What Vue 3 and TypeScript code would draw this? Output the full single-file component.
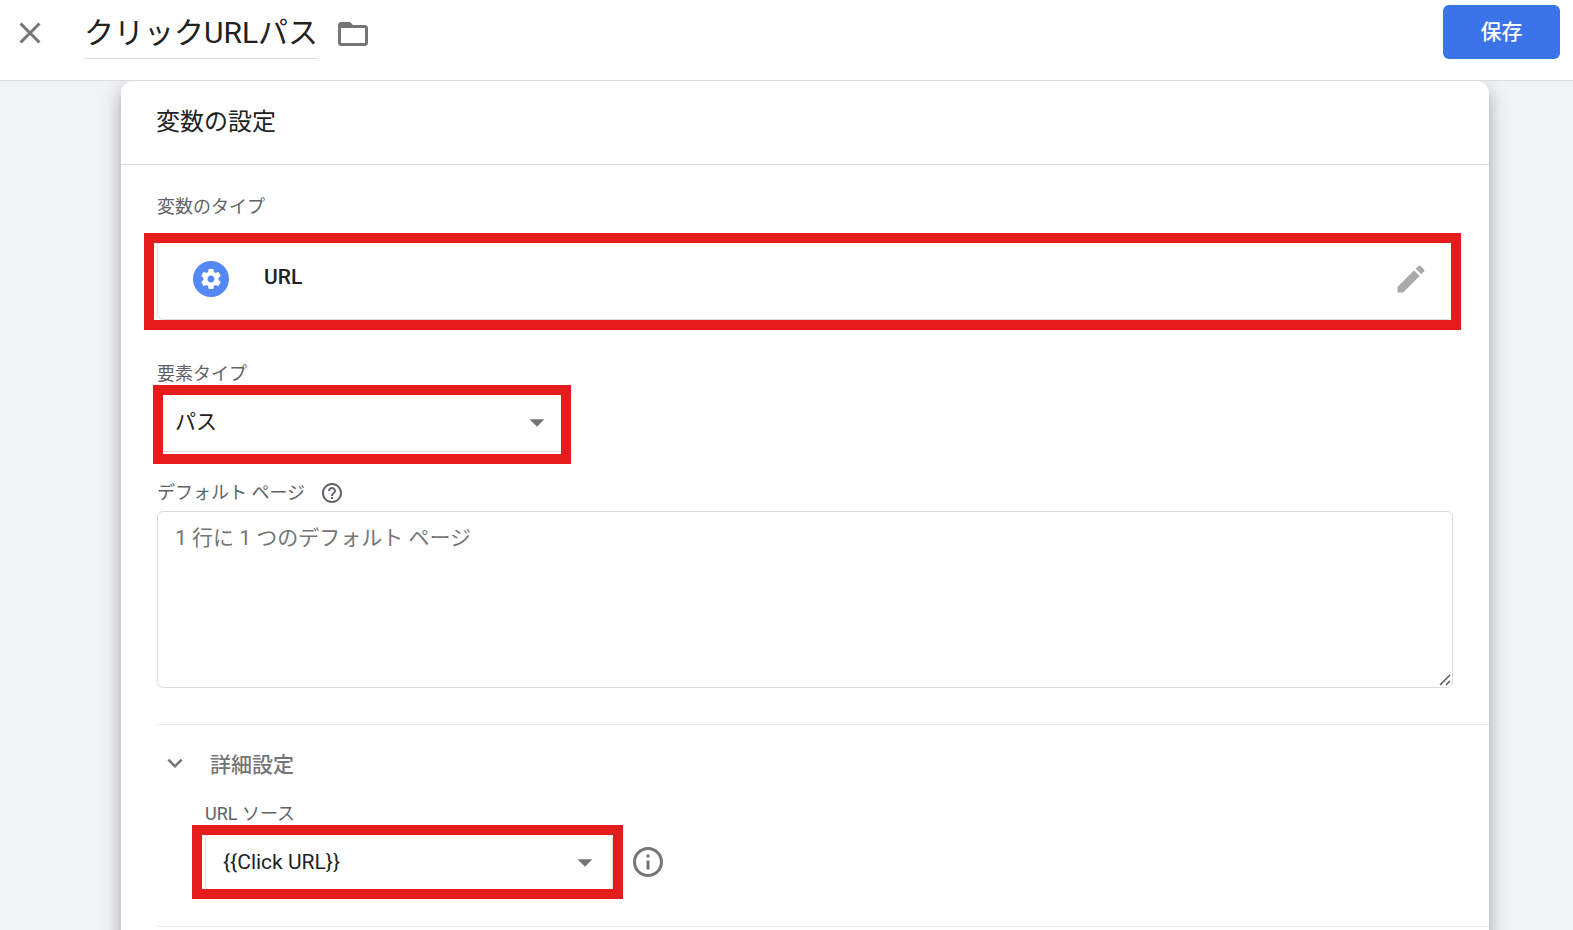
<script setup lang="ts">
import { ref } from 'vue'

const variableName = ref('クリックURLパス')
const componentType = ref('パス')
const componentTypes = ['パス']
const defaultPages = ref('')
const urlSource = ref('{{Click URL}}')
const urlSources = ['{{Click URL}}']
const advancedOpen = ref(true)
</script>

<template>
  <div class="page">
    <header class="topbar">
      <button class="icon-button close" type="button" aria-label="閉じる">
        <svg class="icon" viewBox="0 0 24 24" aria-hidden="true">
          <path d="M19 6.41 17.59 5 12 10.59 6.41 5 5 6.41 10.59 12 5 17.59 6.41 19 12 13.41 17.59 19 19 17.59 13.41 12z" />
        </svg>
      </button>
      <input v-model="variableName" class="name" type="text" aria-label="変数名" />
      <button class="icon-button folder" type="button" aria-label="フォルダ">
        <svg class="icon" viewBox="0 0 24 24" aria-hidden="true">
          <path d="M10 4H4c-1.1 0-1.99.9-1.99 2L2 18c0 1.1.9 2 2 2h16c1.1 0 2-.9 2-2V8c0-1.1-.9-2-2-2h-8l-2-2zM20 18H4V8h16v10z" />
        </svg>
      </button>
      <button class="save" type="button">保存</button>
    </header>

    <main class="workspace">
      <section class="card">
        <h2 class="card-title">変数の設定</h2>
        <div class="card-body">
          <div class="label">変数のタイプ</div>
          <div class="type-row">
            <span class="type-badge">
              <svg class="gear" viewBox="0 0 24 24" aria-hidden="true">
                <path d="M19.43 12.98c.04-.32.07-.64.07-.98s-.03-.66-.07-.98l2.11-1.65c.19-.15.24-.42.12-.64l-2-3.46c-.12-.22-.39-.3-.61-.22l-2.49 1c-.52-.4-1.08-.73-1.69-.98l-.38-2.65C14.46 2.18 14.25 2 14 2h-4c-.25 0-.46.18-.49.42l-.38 2.65c-.61.25-1.17.59-1.69.98l-2.49-1c-.23-.09-.49 0-.61.22l-2 3.46c-.13.22-.07.49.12.64l2.11 1.65c-.04.32-.07.65-.07.98s.03.66.07.98l-2.11 1.65c-.19.15-.24.42-.12.64l2 3.46c.12.22.39.3.61.22l2.49-1c.52.4 1.08.73 1.69.98l.38 2.65c.03.24.24.42.49.42h4c.25 0 .46-.18.49-.42l.38-2.65c.61-.25 1.17-.59 1.69-.98l2.49 1c.23.09.49 0 .61-.22l2-3.46c.12-.22.07-.49-.12-.64l-2.11-1.65zM12 15.5c-1.93 0-3.5-1.57-3.5-3.5s1.57-3.5 3.5-3.5 3.5 1.57 3.5 3.5-1.57 3.5-3.5 3.5z" />
              </svg>
            </span>
            <span class="type-name">URL</span>
            <button class="icon-button edit" type="button" aria-label="編集">
              <svg class="icon" viewBox="0 0 24 24" aria-hidden="true">
                <path d="M3 17.25V21h3.75L17.81 9.94l-3.75-3.75L3 17.25zM20.71 7.04c.39-.39.39-1.02 0-1.41l-2.34-2.34c-.39-.39-1.02-.39-1.41 0l-1.83 1.83 3.75 3.75 1.83-1.83z" />
              </svg>
            </button>
            <span class="marker marker-type"></span>
          </div>

          <label class="label label-component" for="component-type">要素タイプ</label>
          <div class="select-box">
            <select id="component-type" v-model="componentType">
              <option v-for="item in componentTypes" :key="item">{{ item }}</option>
            </select>
            <svg class="arrow" viewBox="0 0 24 24" aria-hidden="true"><path d="M7 9.5l5 5 5-5z" /></svg>
            <span class="marker marker-component"></span>
          </div>

          <div class="label-row">
            <label class="label" for="default-pages">デフォルト ページ</label>
            <button class="icon-button help" type="button" aria-label="ヘルプ">
              <svg class="icon" viewBox="0 0 24 24" aria-hidden="true">
                <path d="M11 18h2v-2h-2v2zm1-16C6.48 2 2 6.48 2 12s4.48 10 10 10 10-4.48 10-10S17.52 2 12 2zm0 18c-4.41 0-8-3.59-8-8s3.59-8 8-8 8 3.59 8 8-3.59 8-8 8zm0-14c-2.21 0-4 1.79-4 4h2c0-1.1.9-2 2-2s2 .9 2 2c0 2-3 1.75-3 5h2c0-2.25 3-2.5 3-5 0-2.21-1.79-4-4-4z" />
              </svg>
            </button>
          </div>
          <div class="textarea-box">
            <textarea id="default-pages" v-model="defaultPages" placeholder="1 行に 1 つのデフォルト ページ"></textarea>
            <svg class="grip" viewBox="0 0 12 12" aria-hidden="true"><path d="M1 11 11 1M7 11l4-4" /></svg>
          </div>
        </div>

        <div class="advanced">
          <button class="advanced-toggle" type="button" :aria-expanded="advancedOpen" @click="advancedOpen = !advancedOpen">
            <svg class="chevron" viewBox="0 0 24 24" aria-hidden="true">
              <path d="M16.59 8.59 12 13.17 7.41 8.59 6 10l6 6 6-6z" />
            </svg>
            詳細設定
          </button>
          <div v-if="advancedOpen" class="advanced-body">
            <label class="label" for="url-source">URL ソース</label>
            <div class="source-row">
              <div class="select-box select-source">
                <select id="url-source" v-model="urlSource">
                  <option v-for="item in urlSources" :key="item">{{ item }}</option>
                </select>
                <svg class="arrow" viewBox="0 0 24 24" aria-hidden="true"><path d="M7 9.5l5 5 5-5z" /></svg>
                <span class="marker marker-source"></span>
              </div>
              <button class="icon-button info" type="button" aria-label="情報">
                <svg class="icon" viewBox="0 0 24 24" aria-hidden="true">
                  <path d="M11 7h2v2h-2zm0 4h2v6h-2zm1-9C6.48 2 2 6.48 2 12s4.48 10 10 10 10-4.48 10-10S17.52 2 12 2zm0 18c-4.41 0-8-3.59-8-8s3.59-8 8-8 8 3.59 8 8-3.59 8-8 8z" />
                </svg>
              </button>
            </div>
          </div>
        </div>
        <div class="card-end"></div>
      </section>
    </main>
  </div>
</template>

<style>
body {
  margin: 0;
}
</style>

<style scoped>
.page {
  display: flex;
  flex-direction: column;
  height: 100vh;
  overflow: hidden;
  background: #f1f3f4;
  color: #212121;
  font-family: Roboto, 'Noto Sans CJK JP', sans-serif;
}

.page * {
  box-sizing: border-box;
}

button,
input,
select,
textarea {
  margin: 0;
  padding: 0;
  border: 0;
  background: none;
  color: inherit;
  font: inherit;
}

.icon-button {
  display: block;
  flex: none;
  width: 36px;
  height: 36px;
  color: #757575;
  cursor: pointer;
}

.icon {
  display: block;
  width: 100%;
  height: 100%;
  fill: currentColor;
}

.topbar {
  position: relative;
  z-index: 1;
  display: flex;
  flex: none;
  align-items: flex-start;
  height: 81px;
  padding: 5px 13px 0 12px;
  border-bottom: 1px solid #dadce0;
  background: #fff;
}

.close {
  margin-top: 10px;
}

.name {
  width: 233px;
  height: 54px;
  margin-left: 36px;
  padding-bottom: 3px;
  border-bottom: 1px solid #dadce0;
  border-radius: 0;
  font-size: 30px;
  outline: none;
}

.folder {
  margin: 11px 0 0 18px;
}

.save {
  width: 117px;
  height: 54px;
  margin-left: auto;
  padding-bottom: 4px;
  border-radius: 6px;
  background: #3b73e9;
  color: #fff;
  font-size: 21px;
  font-weight: 500;
  cursor: pointer;
}

.workspace {
  flex: 1;
  min-height: 0;
  padding: 0 84px 0 121px;
}

.card {
  border-radius: 12px;
  background: #fff;
  box-shadow:
    0 12px 15px 1px rgba(0, 0, 0, 0.14),
    0 4px 21px 3px rgba(0, 0, 0, 0.12),
    0 8px 8px -4px rgba(0, 0, 0, 0.2);
}

.card-title {
  margin: 0;
  padding: 23px 35px 24px;
  border-bottom: 1px solid #dadce0;
  font-size: 24px;
  font-weight: 400;
  line-height: 36px;
}

.card-body {
  padding: 30px 36px 36px;
}

.label {
  display: block;
  color: #5f6368;
  font-size: 18px;
  line-height: 24px;
}

.type-row {
  position: relative;
  display: flex;
  align-items: center;
  height: 82px;
  margin-top: 19px;
  padding: 0 23px 0 35px;
  border: 1px solid #dadce0;
  border-radius: 6px;
}

.type-badge {
  display: flex;
  align-items: center;
  justify-content: center;
  width: 36px;
  height: 36px;
  border-radius: 50%;
  background: #5488f6;
}

.gear {
  width: 24px;
  height: 24px;
  fill: #fff;
}

.type-name {
  flex: 1;
  padding: 0 0 4px 35px;
  font-size: 21px;
  font-weight: 500;
  line-height: 28px;
}

.edit {
  color: #aaa;
}

.marker {
  position: absolute;
  border: 10px solid #e61c1c;
  pointer-events: none;
}

.marker-type {
  inset: -6px -9px -11px -14px;
}

.marker-component {
  inset: -8px -6px -12px -4px;
}

.marker-source {
  inset: -8px -10px -7px -13px;
}

.label-component {
  margin-top: 42px;
}

.select-box {
  position: relative;
  width: 408px;
  height: 59px;
  margin-top: 7px;
}

.select-box select {
  display: block;
  width: 100%;
  height: 100%;
  padding: 0 46px 1px 17px;
  border: 1px solid #dadce0;
  border-radius: 6px;
  appearance: none;
  font-size: 21px;
}

.arrow {
  position: absolute;
  top: 12px;
  right: 10px;
  width: 36px;
  height: 36px;
  fill: #757575;
  pointer-events: none;
}

.label-row {
  display: flex;
  align-items: center;
  gap: 15px;
  margin-top: 29px;
}

.help {
  width: 24px;
  height: 24px;
  color: #5f6368;
}

.textarea-box {
  position: relative;
  margin-top: 6px;
}

textarea {
  display: block;
  width: 100%;
  height: 177px;
  padding: 11px 17px;
  border: 1px solid #dadce0;
  border-radius: 6px;
  font-size: 21px;
  line-height: 30px;
  resize: none;
}

textarea::placeholder {
  color: #757575;
}

.grip {
  position: absolute;
  right: 2px;
  bottom: 2px;
  width: 12px;
  height: 12px;
  fill: none;
  stroke: #555;
  stroke-width: 1.5;
  pointer-events: none;
}

.advanced {
  margin-left: 36px;
  padding: 28px 0 34px;
  border-top: 1px solid #e8eaed;
}

.advanced-toggle {
  display: flex;
  align-items: center;
  gap: 20px;
  color: #757575;
  font-size: 21px;
  font-weight: 500;
  line-height: 24px;
  cursor: pointer;
}

.chevron {
  width: 30px;
  height: 30px;
  margin: -6px 0 -2px 3px;
  fill: #757575;
}

.advanced-body {
  margin: 25px 0 0 48px;
}

.source-row {
  display: flex;
  align-items: flex-start;
  gap: 17px;
  margin-top: 7px;
}

.select-source {
  margin-top: 0;
}

.info {
  margin-top: 11px;
}

.card-end {
  height: 48px;
  margin-left: 36px;
  border-top: 1px solid #e8eaed;
}
</style>
